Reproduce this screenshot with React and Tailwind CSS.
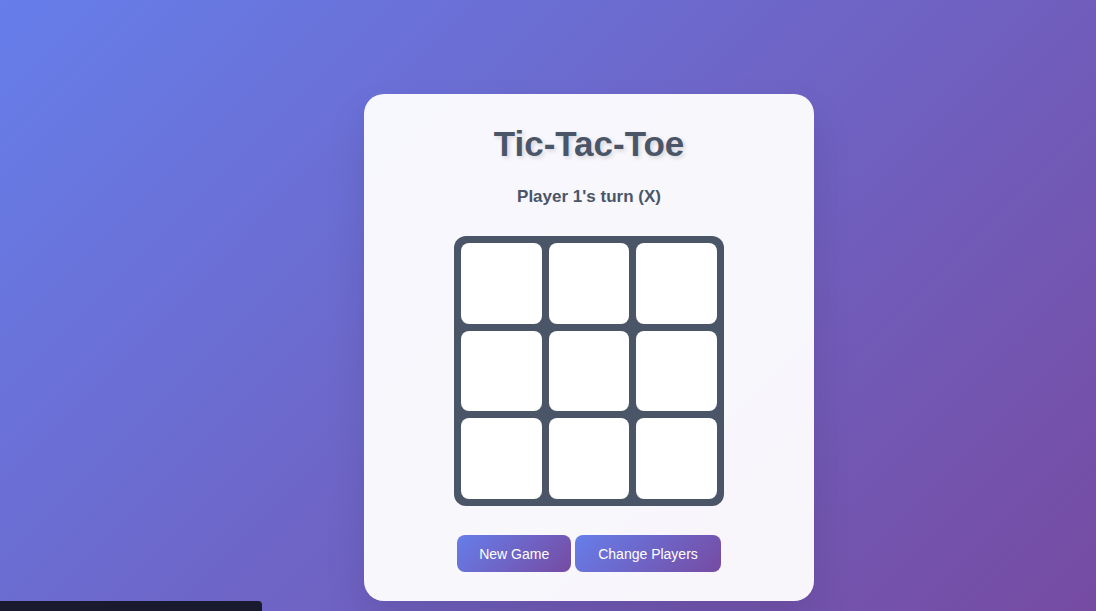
export default function App() {
  const cells = Array.from({ length: 9 });
  return (
    <div
      className="relative h-[611px] w-full overflow-hidden bg-[linear-gradient(135deg,#667eea_0%,#764ba2_100%)] pt-[94px]"
      style={{ fontFamily: '"Liberation Sans", Arial, sans-serif' }}
    >
      <div className="ml-[364px] flex w-[450px] flex-col items-center rounded-[20px] bg-white/95 px-[30px] pt-[30px] pb-[29px] shadow-[0_20px_40px_rgba(0,0,0,0.1)]">
        <h1 className="text-[35px] font-bold leading-[40px] text-[#4a5568] [text-shadow:2px_2px_4px_rgba(0,0,0,0.15)]">
          Tic-Tac-Toe
        </h1>
        <div className="mt-[23px] text-[17px] font-bold leading-[20px] text-[#4a5568]">
          Player 1's turn (X)
        </div>
        <div className="mt-[29px] grid h-[270px] w-[270px] grid-cols-3 grid-rows-3 gap-[7px] rounded-[12px] bg-[#4a5568] p-[7px]">
          {cells.map((_, i) => (
            <button key={i} className="rounded-[8px] bg-white" />
          ))}
        </div>
        <div className="mt-[29px] flex gap-[4px]">
          <button className="h-[37px] rounded-[8px] bg-[linear-gradient(135deg,#667eea_0%,#764ba2_100%)] px-[22px] pt-[2px] text-[14px] text-white">
            New Game
          </button>
          <button className="h-[37px] rounded-[8px] bg-[linear-gradient(135deg,#667eea_0%,#764ba2_100%)] px-[23px] pt-[2px] text-[14px] text-white">
            Change Players
          </button>
        </div>
      </div>
      <div className="absolute bottom-0 left-0 h-[10px] w-[262px] rounded-tr-[4px] bg-[#1a1a2e]" />
    </div>
  );
}
